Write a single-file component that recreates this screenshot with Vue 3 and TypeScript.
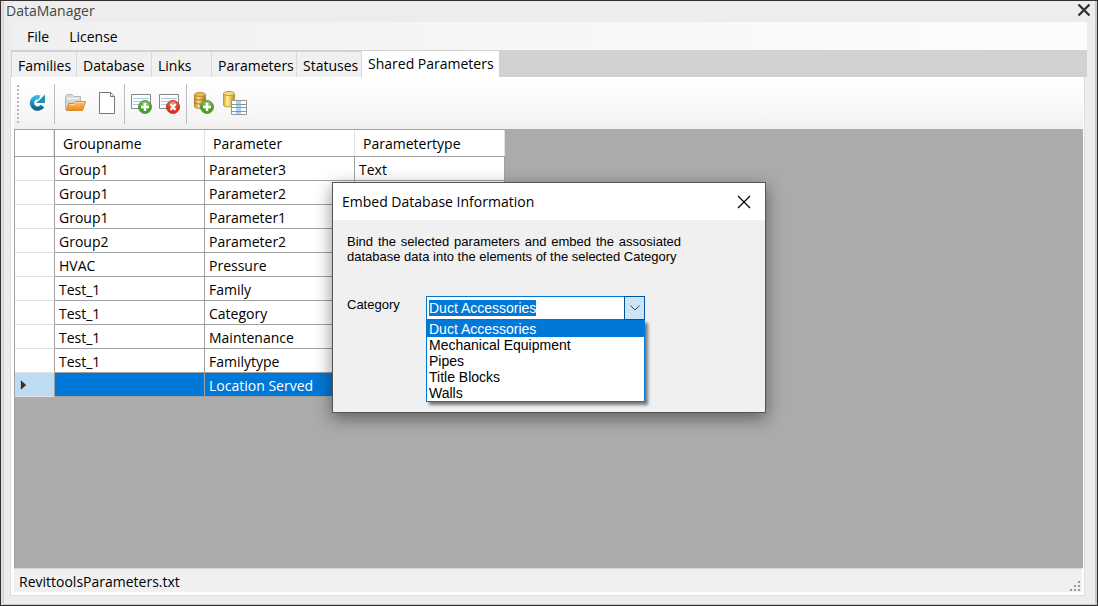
<script setup lang="ts">
import { onMounted, ref } from 'vue'

interface Row {
  group: string
  parameter: string
  type: string
}

const tabs: string[] = ['Families', 'Database', 'Links', 'Parameters', 'Statuses', 'Shared Parameters']
const activeTab = ref('Shared Parameters')

const rows: Row[] = [
  { group: 'Group1', parameter: 'Parameter3', type: 'Text' },
  { group: 'Group1', parameter: 'Parameter2', type: '' },
  { group: 'Group1', parameter: 'Parameter1', type: '' },
  { group: 'Group2', parameter: 'Parameter2', type: '' },
  { group: 'HVAC', parameter: 'Pressure', type: '' },
  { group: 'Test_1', parameter: 'Family', type: '' },
  { group: 'Test_1', parameter: 'Category', type: '' },
  { group: 'Test_1', parameter: 'Maintenance', type: '' },
  { group: 'Test_1', parameter: 'Familytype', type: '' },
  { group: '', parameter: 'Location Served', type: '' },
]
const selectedRow = ref(9)

const categories: string[] = ['Duct Accessories', 'Mechanical Equipment', 'Pipes', 'Title Blocks', 'Walls']
const category = ref('Duct Accessories')
const listOpen = ref(true)
const categoryInput = ref<HTMLInputElement | null>(null)

onMounted(() => {
  categoryInput.value?.focus()
  categoryInput.value?.select()
})
</script>

<template>
  <div class="window">
    <header class="titlebar">
      <span>DataManager</span>
      <button class="close" type="button" aria-label="Close window">
        <svg width="14" height="14" viewBox="0 0 14 14"><path d="M1.5 1.5l11 11M12.5 1.5l-11 11" stroke="#333" stroke-width="2.4" /></svg>
      </button>
    </header>

    <nav class="menu">
      <button type="button">File</button>
      <button type="button">License</button>
    </nav>

    <div class="tabs" role="tablist">
      <button
        v-for="tab in tabs"
        :key="tab"
        type="button"
        role="tab"
        :aria-selected="tab === activeTab"
        :class="['tab', { active: tab === activeTab }]"
        @click="activeTab = tab"
      >{{ tab }}</button>
    </div>

    <main class="page">
      <div class="toolbar" role="toolbar">
        <span class="grip"></span>
        <div class="group first">
          <button type="button" aria-label="Refresh">
            <svg width="24" height="24" viewBox="0 0 24 24">
              <defs><linearGradient id="blue" x2="0" y2="1"><stop offset="0" stop-color="#35b8e4" /><stop offset="1" stop-color="#14648f" /></linearGradient></defs>
              <path d="M17.500 15A5.700 5.700 0 1 1 14.500 6.500" fill="none" stroke="url(#blue)" stroke-width="4.400" />
              <path d="M20 3.500v8.500h-9l3.500-3z" fill="#1d91bd" />
            </svg>
          </button>
        </div>
        <span class="sep"></span>
        <div class="group files">
          <button type="button" aria-label="Open">
            <svg width="24" height="24" viewBox="0 0 24 24">
              <defs><linearGradient id="orange" x2="0" y2="1"><stop offset="0" stop-color="#ffc46c" /><stop offset="1" stop-color="#ee861c" /></linearGradient></defs>
              <path d="M2.500 18.500v-13l1.500-2h5l1.500 2h7v13z" fill="#d5d5d2" stroke="#bab9b6" />
              <path d="M4 7.500h12" stroke="#eee" stroke-width="2" />
              <path d="M3.500 19.500l2-7h5.500l2-2h9.500l-3 9z" fill="url(#orange)" stroke="#dc8b30" />
              <path d="M6.500 13.500h5l2-2h7.500" fill="none" stroke="#ffdda4" />
            </svg>
          </button>
          <button type="button" aria-label="New file">
            <svg width="24" height="24" viewBox="0 0 24 24">
              <path d="M4.500 1.500h11l4 4v17h-15z" fill="#fff" stroke="#777" />
              <path d="M15.500 1.500v4h4" fill="none" stroke="#777" />
            </svg>
          </button>
        </div>
        <span class="sep"></span>
        <div class="group entries">
          <button type="button" aria-label="Add parameter">
            <svg width="24" height="24" viewBox="0 0 24 24">
              <defs><radialGradient id="green" cy="0.25"><stop offset="0" stop-color="#a3d283" /><stop offset="1" stop-color="#489d26" /></radialGradient></defs>
              <path d="M2.500 3.500h19v14h-19z" fill="#fff" stroke="#85898d" />
              <path d="M4 7.500h16M4 10.500h16M4 13.500h16" stroke="#a9cbed" />
              <circle cx="16" cy="16" r="6.500" fill="url(#green)" stroke="#559c38" />
              <path d="M16 12v8M12 16h8" stroke="#fff" stroke-width="2.500" />
            </svg>
          </button>
          <button type="button" aria-label="Delete parameter">
            <svg width="24" height="24" viewBox="0 0 24 24">
              <defs><radialGradient id="red" cy="0.25"><stop offset="0" stop-color="#f79977" /><stop offset="1" stop-color="#d6320f" /></radialGradient></defs>
              <path d="M2.500 3.500h19v14h-19z" fill="#fff" stroke="#85898d" />
              <path d="M4 7.500h16M4 10.500h16M4 13.500h16" stroke="#a9cbed" />
              <circle cx="16" cy="16" r="6.500" fill="url(#red)" stroke="#c63b20" />
              <path d="M13.500 13l5 6M18.500 13l-5 6" stroke="#fff" stroke-width="2.200" />
            </svg>
          </button>
        </div>
        <span class="sep"></span>
        <div class="group data">
          <button type="button" aria-label="Add to database">
            <svg width="24" height="24" viewBox="0 0 24 24">
              <defs><linearGradient id="gold"><stop offset="0" stop-color="#c28b25" /><stop offset="0.350" stop-color="#ffe08a" /><stop offset="1" stop-color="#a56f19" /></linearGradient></defs>
              <path d="M2.500 3.500v12c0 2.500 11 2.500 11 0v-12z" fill="url(#gold)" stroke="#b98a35" />
              <path d="M2.500 7.500c0 2 11 2 11 0M2.500 11.500c0 2 11 2 11 0" fill="none" stroke="#a87828" />
              <ellipse cx="8" cy="3.500" rx="5.500" ry="2" fill="#e3b75c" stroke="#c4923c" />
              <circle cx="15" cy="16" r="6.500" fill="url(#green)" stroke="#559c38" />
              <path d="M15 12v8M11 16h8" stroke="#fff" stroke-width="2.500" />
            </svg>
          </button>
          <button type="button" aria-label="Database table">
            <svg width="24" height="24" viewBox="0 0 24 24">
              <defs><linearGradient id="yellow"><stop offset="0" stop-color="#dca51d" /><stop offset="0.350" stop-color="#fff3a4" /><stop offset="1" stop-color="#c58c12" /></linearGradient></defs>
              <path d="M0.500 2.500v11.500c0 2.500 11 2.500 11 0v-11.500z" fill="url(#yellow)" stroke="#c69a32" />
              <ellipse cx="6" cy="2.500" rx="5.500" ry="2" fill="#f5dc86" stroke="#c69a32" />
              <path d="M8.500 9.500h15v14h-15z" fill="#fff" stroke="#92969b" />
              <path d="M13 10h5v13h-5z" fill="#a9d0f5" />
              <path d="M8 13.500h16M8 16.500h16M8 20.500h16" stroke="#8c939a" />
            </svg>
          </button>
        </div>
      </div>

      <section class="grid">
        <table>
          <thead>
            <tr><th class="mark"></th><th>Groupname</th><th>Parameter</th><th>Parametertype</th></tr>
          </thead>
          <tbody>
            <tr v-for="(row, i) in rows" :key="i" :class="{ selected: i === selectedRow }" @click="selectedRow = i">
              <td class="mark">
                <svg v-if="i === selectedRow" width="7" height="12" viewBox="0 0 7 12"><path d="M0.500 0.500v11l6-5.500z" fill="#333" stroke="#fff" stroke-width="0.500" /></svg>
              </td>
              <td>{{ row.group }}</td>
              <td>{{ row.parameter }}</td>
              <td>{{ row.type }}</td>
            </tr>
          </tbody>
        </table>
      </section>

      <footer class="status">
        <span>RevittoolsParameters.txt</span>
        <svg width="12" height="12" viewBox="0 0 12 12"><path d="M9 1h2v2H9zM5 5h2v2H5zM9 5h2v2H9zM1 9h2v2H1zM5 9h2v2H5zM9 9h2v2H9z" fill="#999" /></svg>
      </footer>
    </main>

    <div class="overlay">
      <section class="dialog" role="dialog" aria-labelledby="dialog-title">
        <header class="dialog-title">
          <span id="dialog-title">Embed Database Information</span>
          <button type="button" aria-label="Close dialog">
            <svg width="14" height="14" viewBox="0 0 14 14"><path d="M1 1l12 12M13 1L1 13" stroke="#000" stroke-width="1.200" /></svg>
          </button>
        </header>
        <div class="dialog-body">
          <p>Bind the selected parameters and embed the assosiated database data into the elements of the selected Category</p>
          <div class="field">
            <label for="category">Category</label>
            <div class="combo">
              <div class="combo-box">
                <input id="category" ref="categoryInput" v-model="category" type="text" autocomplete="off" spellcheck="false" />
                <button type="button" aria-label="Show categories" @click="listOpen = !listOpen">
                  <svg width="10" height="6" viewBox="0 0 10 6"><path d="M0.500 0.500L5 5l4.500-4.500" fill="none" stroke="#444" /></svg>
                </button>
              </div>
              <select v-if="listOpen" v-model="category" size="5" aria-label="Categories">
                <option v-for="item in categories" :key="item" :value="item">{{ item }}</option>
              </select>
            </div>
          </div>
        </div>
      </section>
    </div>
  </div>
</template>

<style>
body {
  margin: 0;
}
</style>

<style scoped>
* {
  box-sizing: border-box;
}

button {
  font: inherit;
  color: inherit;
  border: 0;
  padding: 0;
  margin: 0;
  background: transparent;
}

svg {
  display: block;
}

.window {
  position: relative;
  display: flex;
  flex-direction: column;
  min-height: 100vh;
  padding: 0 10px 9px;
  border: 1px solid #332f32;
  background: #eeeded;
  box-shadow: inset 2px 0 #e5e0e2, inset 3px 0 #cfcdce, inset -2px -1px #c8c8c8;
  font: 14px/20px "Open Sans", "Noto Sans", sans-serif;
  color: #000;
}

.titlebar {
  display: flex;
  justify-content: space-between;
  height: 21px;
  margin: 0 -6px;
  padding: 0 2px 0 1px;
  color: #444;
}

.close {
  align-self: flex-start;
  padding: 2px 0;
}

.menu {
  display: flex;
  gap: 20px;
  height: 28px;
  padding: 2px 16px 0;
  background: linear-gradient(90deg, #f0f0f0, #fdfdfd);
}

.tabs {
  display: flex;
  align-items: flex-end;
  height: 27px;
  padding-left: 1px;
  background: #d2d2d2;
}

.tab {
  height: 25px;
  padding: 2px 0 0 6px;
  border-right: 1px solid #d9d9d9;
  background: #f0f0f0;
  text-align: left;
  white-space: nowrap;
}

.tab:nth-child(1) { width: 65px; }
.tab:nth-child(2) { width: 75px; }
.tab:nth-child(3) { width: 60px; }
.tab:nth-child(4) { width: 85px; }
.tab:nth-child(5) { width: 65px; }
.tab:nth-child(6) { width: 137px; }

.tab.active {
  height: 26px;
  padding-top: 0;
  border: 0;
  background: #fff;
}

.page {
  flex: 1;
  display: flex;
  flex-direction: column;
  margin-right: 2px;
  padding: 2px 1px 3px 3px;
  border: solid #dcdcdc;
  border-width: 0 1px 1px 0;
  background: #fff;
  box-shadow: -1px 0 #dcdcdc;
}

.toolbar {
  display: flex;
  align-items: center;
  height: 50px;
  padding-left: 3px;
  border-radius: 0 3px 3px 0;
  background: linear-gradient(#fff, #f8f8f8 60%, #f0f0f0);
}

.grip {
  width: 2px;
  height: 38px;
  background: repeating-linear-gradient(#b8b8b8 0 2px, transparent 2px 4px);
}

.sep {
  width: 1px;
  height: 40px;
  background: #bdbdbd;
}

.group {
  display: flex;
}

.group button {
  padding: 1px 2px 3px;
}

.first { margin: 0 3px 0 4px; }
.files { gap: 4px; margin: 0 3px 0 6px; }
.entries { margin: 0 3px 0 2px; }
.data { gap: 3px; margin-left: 3px; }

.grid {
  flex: 1;
  border-left: 1px solid #a0a0a0;
  background: #ababab;
}

table {
  width: 490px;
  table-layout: fixed;
  border-spacing: 0;
  background: #fff;
}

th {
  height: 28px;
  padding: 2px 8px 0;
  border: solid #a0a0a0;
  border-width: 1px 0;
  box-shadow: inset -1px 0 #e3e3e3;
  font-weight: 400;
  text-align: left;
}

td {
  height: 24px;
  padding: 2px 4px 0;
  border: solid #a0a0a0;
  border-width: 0 1px 1px 0;
}

.mark {
  width: 40px;
  border-right: 1px solid #a0a0a0;
}

td.mark {
  border-bottom-color: #e3e3e3;
  padding: 0 5px;
}

.selected td {
  background: #0078d7;
  color: #fff;
}

.selected td.mark {
  background: #bcdcf4;
}

.status {
  display: flex;
  justify-content: space-between;
  align-items: center;
  height: 24px;
  margin-right: 1px;
  padding: 2px 1px 0 5px;
  border-top: 1px solid #d7d7d7;
  background: #f0f0f0;
}

.status svg {
  align-self: flex-end;
}

.overlay {
  position: absolute;
  inset: 0;
  display: flex;
  justify-content: center;
  align-items: flex-start;
  padding-top: 181px;
}

.dialog {
  width: 434px;
  border: 1px solid #555;
  background: #f0f0f0;
  box-shadow: 0 5px 16px rgba(0, 0, 0, 0.45);
}

.dialog-title {
  display: flex;
  align-items: center;
  justify-content: space-between;
  height: 37px;
  padding: 0 14px 0 9px;
  background: #fff;
}

.dialog-body {
  min-height: 192px;
  padding: 14px 14px 10px;
  font: 13px/15px "Liberation Sans", Arial, sans-serif;
}

p {
  width: 334px;
  margin: 0 0 32px;
  text-align: justify;
}

.field {
  display: flex;
}

.field label {
  width: 79px;
  padding-top: 1px;
}

.combo {
  width: 219px;
  font-size: 14px;
}

.combo-box {
  display: flex;
  height: 24px;
  border: 1px solid #0078d7;
  background: #fff;
}

input {
  flex: 1;
  min-width: 0;
  height: 22px;
  padding: 0 2px;
  border: 0;
  outline: 0;
  background: transparent;
  font: inherit;
  line-height: 18px;
}

input::selection {
  background: #0078d7;
  color: #fff;
}

.combo-box button {
  display: grid;
  place-items: center;
  width: 21px;
  margin: -1px;
  border: 1px solid #00559b;
  background: #cce4f7;
}

select {
  display: block;
  width: 100%;
  height: 82px;
  padding: 0;
  border: 1px solid #0078d7;
  border-radius: 0;
  outline: 0;
  overflow: hidden;
  background: #fff;
  box-shadow: 3px 3px 3px rgba(0, 0, 0, 0.5);
  font: inherit;
  scrollbar-width: none;
}

option {
  height: 16px;
  min-height: 16px;
  padding: 0 2px;
  line-height: 16px;
  color: #000;
}

option:checked {
  background: linear-gradient(#0078d7, #0078d7);
  color: #fff;
}
</style>
